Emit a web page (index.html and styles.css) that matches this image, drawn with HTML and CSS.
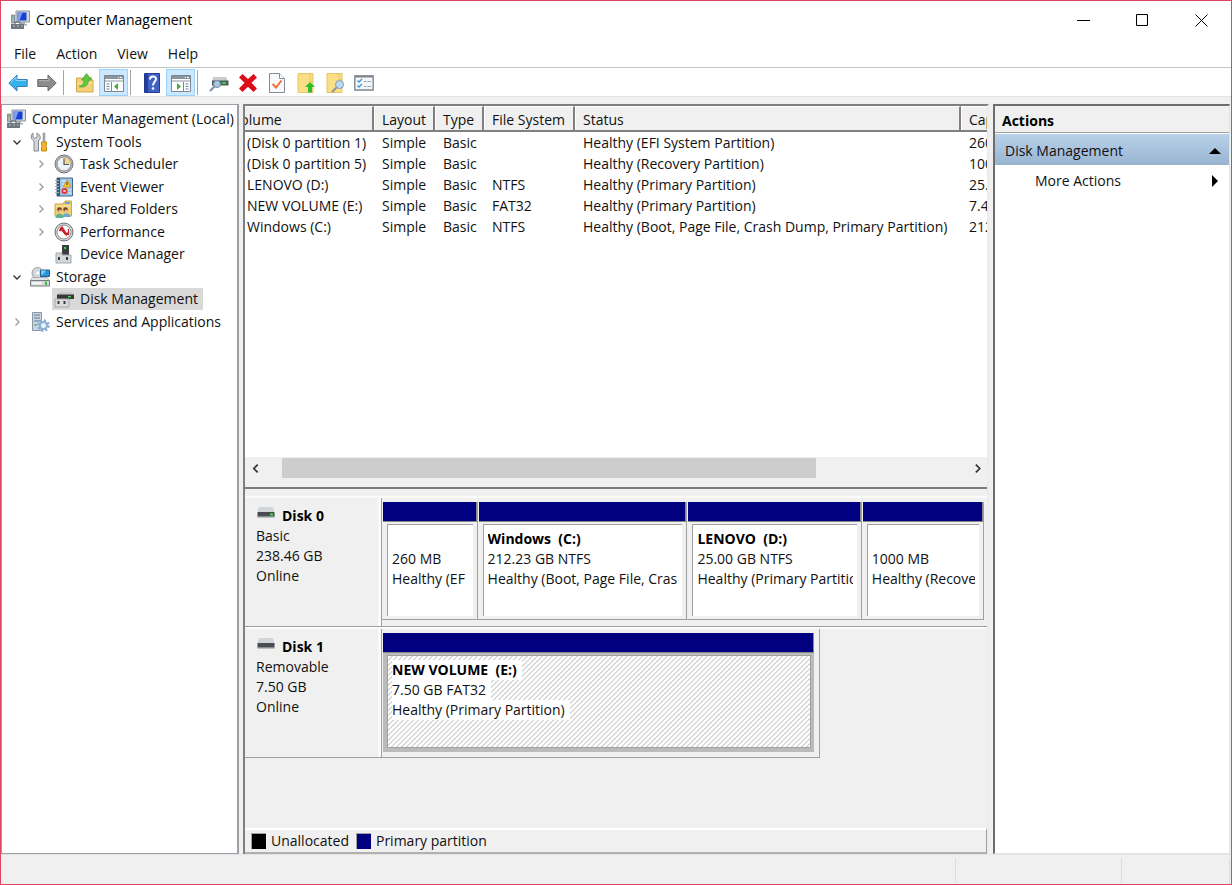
FILE: index.html
```html
<!DOCTYPE html>
<html lang="en">
<head>
  <meta charset="UTF-8">
  <meta name="viewport" content="width=device-width, initial-scale=1.0">
  <title>Computer Management</title>
  <link rel="stylesheet" href="styles.css">
</head>
<body>
  <!-- shared icons -->
  <svg class="sprite" aria-hidden="true">
    <symbol id="icon-computer" viewBox="0 0 20 20">
      <path d="M6 1h13.500v11H6z" fill="#d5dadf" stroke="#8b949e" stroke-width="1"/>
      <path d="M7.500 2.500h9v8h-9z" fill="#1b3fd0"/>
      <path d="M7.500 2.500h5l-3 8h-2z" fill="#7f9df0"/>
      <path d="M1.500 5h3v8h-3z" fill="#aab2ba" stroke="#737b84" stroke-width=".8"/>
      <path d="M11 12h4v2h2v1.500h-7z" fill="#a7afb6"/>
      <path d="M1 14h13v5H1z" fill="#6d7780"/>
      <path d="M5 14v-2h5v2" fill="none" stroke="#4e5963"/>
      <path d="M3 16h2M7 16h2M11 16h1.500" stroke="#b9bfc5" stroke-width="1"/>
      <circle cx="3" cy="7" r=".8" fill="#3ac44a"/>
    </symbol>
    <symbol id="icon-drive" viewBox="0 0 18 12">
      <path d="M2 0h14l1.500 5H.5z" fill="#d2d5d8"/>
      <path d="M.5 5h17v4.500H.5z" fill="#4a4d4f"/>
      <path d="M.5 9h17v1.500H.5z" fill="#8b8e90"/>
    </symbol>
  </svg>

  <header class="title-bar">
    <svg class="icon"><use href="#icon-computer"/></svg>
    <h1>Computer Management</h1>
    <div class="window-buttons">
      <button type="button" aria-label="Minimize"><svg viewBox="0 0 13 13"><path d="M0 6.500h13"/></svg></button>
      <button type="button" aria-label="Maximize"><svg viewBox="0 0 13 13"><path d="M.5.5h11v11H.5z"/></svg></button>
      <button type="button" aria-label="Close"><svg viewBox="0 0 13 13"><path d="M.5.5l12 12M12.500.5l-12 12"/></svg></button>
    </div>
  </header>

  <nav class="menu-bar">
    <button type="button">File</button>
    <button type="button">Action</button>
    <button type="button">View</button>
    <button type="button">Help</button>
  </nav>

  <div class="toolbar">
    <button type="button" aria-label="Back">
      <svg class="icon" viewBox="0 0 20 20"><path d="M.8 10L9 2v4.500h10.200v7H9V18z" fill="#35b1ee" stroke="#3a7fb4"/><path d="M2.500 9.500L8 4.200v3.300h10" fill="none" stroke="#8bd8fb"/></svg>
    </button>
    <button type="button" aria-label="Forward">
      <svg class="icon" viewBox="0 0 20 20"><path d="M19.200 10L11 2v4.500H.8v7H11V18z" fill="#8c8c8c" stroke="#686868"/><path d="M2 7.700h10V4.500" fill="none" stroke="#b5b5b5"/></svg>
    </button>
    <span class="separator"></span>
    <button type="button" aria-label="Up one level">
      <svg class="icon" viewBox="0 0 20 20"><path d="M1.500 5h6l2 2h8.500v12H1.500z" fill="#f3d077" stroke="#d2a849"/><path d="M2.500 10h15" stroke="#fbe7a8"/><path d="M13 4h4v2h-4z" fill="#d8b560"/><path d="M4 13.500c3.500-.5 5-3 5-6.500H6.500l5-6.500 5 6.500h-3c0 5-4 8.500-9.500 6.500z" fill="#5cc93f" stroke="#3f9e2b" stroke-width=".7"/></svg>
    </button>
    <button type="button" class="active" aria-label="Show/Hide Console Tree">
      <svg class="icon" viewBox="0 0 20 20"><path d="M.5 2.500h19v16H.5z" fill="#fff" stroke="#7d8791"/><path d="M1 3h18v3H1z" fill="#8a949e"/><path d="M14 4.500h1m1 0h2" stroke="#fff"/><path d="M1 7h18v2H1z" fill="#c4cad0"/><path d="M7.500 9v9" stroke="#7d8791"/><path d="M2.500 11h3m-3 2.500h3m-3 2.500h3" stroke="#5b87b5"/><path d="M14 10v7l-4-3.500z" fill="#3fae35"/></svg>
    </button>
    <span class="separator"></span>
    <button type="button" aria-label="Help">
      <svg class="icon" viewBox="0 0 20 20"><path d="M2.500.5h15v19h-15z" fill="#3f62c4" stroke="#203a8d"/><path d="M3 1h3v18H3z" fill="#243f96"/><path d="M8 6.500c0-4 6-4 6-.5 0 2.500-3 3-3 6.500" fill="none" stroke="#fff" stroke-width="2"/><circle cx="11" cy="15.500" r="1.300" fill="#fff"/></svg>
    </button>
    <button type="button" class="active" aria-label="Show/Hide Action Pane">
      <svg class="icon" viewBox="0 0 20 20"><path d="M.5 2.500h19v16H.5z" fill="#fff" stroke="#7d8791"/><path d="M1 3h18v3H1z" fill="#8a949e"/><path d="M14 4.500h1m1 0h2" stroke="#fff"/><path d="M1 7h18v2H1z" fill="#c4cad0"/><path d="M12.500 9v9" stroke="#7d8791"/><path d="M14.500 11h3m-3 2.500h3m-3 2.500h3" stroke="#5b87b5"/><path d="M6 10v7l4-3.500z" fill="#3fae35"/></svg>
    </button>
    <span class="separator"></span>
    <button type="button" aria-label="Rescan disks">
      <svg class="icon" viewBox="0 0 20 20"><path d="M4 4h13l2 4H3z" fill="#c8cccf"/><path d="M3 7.500h16.500v5H3z" fill="#55595c"/><path d="M13 9h4v2h-4z" fill="#35d04c"/><path d="M1 18l5-5" stroke="#7a8fa3" stroke-width="2"/><circle cx="8" cy="11" r="3.500" fill="#a9c7df" stroke="#708ba2"/></svg>
    </button>
    <button type="button" aria-label="Delete">
      <svg class="icon" viewBox="0 0 20 20"><path d="M1 4.500L4.500 1 10 6l5.500-5L19 4.500 13.500 9.800l5.500 5.700-3.500 3.500L10 13.700 4.500 19 1 15.500l5.500-5.700z" fill="#dc0d19"/></svg>
    </button>
    <button type="button" aria-label="Properties">
      <svg class="icon" viewBox="0 0 20 20"><path d="M2.500.5h10l5 5v14h-15z" fill="#f8f9fb" stroke="#858b92"/><path d="M12.500.5v5h5" fill="#fff" stroke="#858b92"/><path d="M5.500 11l3.500 3.500 5.500-7" fill="none" stroke="#ee7038" stroke-width="2"/></svg>
    </button>
    <button type="button" aria-label="Attach VHD">
      <svg class="icon" viewBox="0 0 20 20"><path d="M2 .5h15v19H2z" fill="#fbdf87" stroke="#e7c565"/><path d="M14 .5v8h3" fill="none" stroke="#e7c565"/><path d="M14 9l5 5h-3v5.500h-4V14H9z" fill="#2fbf2b"/></svg>
    </button>
    <button type="button" aria-label="Create VHD">
      <svg class="icon" viewBox="0 0 20 20"><path d="M2 .5h15v19H2z" fill="#fbdf87" stroke="#e7c565"/><path d="M14 .5v6h3" fill="none" stroke="#e7c565"/><path d="M7 19l5-5" stroke="#8d949c" stroke-width="2"/><circle cx="14.500" cy="11.500" r="4" fill="#bcdaf0" stroke="#8297aa"/></svg>
    </button>
    <button type="button" aria-label="Disk list">
      <svg class="icon" viewBox="0 0 20 20"><path d="M.8 3h18.400v14H.8z" fill="#f4f6f8" stroke="#7f878f" stroke-width="1.400"/><path d="M1 3.500h18" stroke="#7f878f" stroke-width="2"/><path d="M3.500 7.500l1.500 1.500 3-3M3.500 12.500L5 14l3-3" fill="none" stroke="#3e98e0" stroke-width="1.400"/><path d="M10 8.500h2.500m1 0H17M10 13.500h2.500m1 0H17" stroke="#9aa2aa"/></svg>
    </button>
  </div>

  <main class="workspace">
    <!-- console tree -->
    <aside class="tree-pane">
      <ul class="tree">
        <li class="root">
          <span class="node"><svg class="icon"><use href="#icon-computer"/></svg>Computer Management (Local)</span>
        </li>
        <li>
          <svg class="twisty open" viewBox="0 0 8 8"><path d="M.5 2.500L4 6l3.500-3.500"/></svg>
          <span class="node">
            <svg class="icon" viewBox="0 0 20 20"><path d="M3 1v4l2 1.500L7 5V1c4 2 4 6 1.500 8v10H4V9C.5 7 .5 3 3 1z" fill="#d3d6d9" stroke="#85898d"/><path d="M13 1h2v9h-2z" fill="#a9adb0" stroke="#85898d" stroke-width=".5"/><path d="M11.500 10h5v3l-1 1 1 1v4h-5v-4l1-1-1-1z" fill="#f5b429" stroke="#cb8a14"/></svg>
            System Tools
          </span>
        </li>
        <li class="child">
          <svg class="twisty" viewBox="0 0 8 8"><path d="M2.500.5L6 4 2.500 7.500"/></svg>
          <span class="node">
            <svg class="icon" viewBox="0 0 20 20"><circle cx="10" cy="10" r="9" fill="#b0b4b8" stroke="#76797d"/><circle cx="10" cy="10" r="7" fill="#eef3fa" stroke="#8f9398"/><path d="M10 10V3.500a6.500 6.500 0 0 1 6.500 6.500z" fill="#f6d48a"/><path d="M10 4.500V10.500h5" fill="none" stroke="#4d5966" stroke-width="1.200"/></svg>
            Task Scheduler
          </span>
        </li>
        <li class="child">
          <svg class="twisty" viewBox="0 0 8 8"><path d="M2.500.5L6 4 2.500 7.500"/></svg>
          <span class="node">
            <svg class="icon" viewBox="0 0 20 20"><path d="M3 1h15.500v18H3z" fill="#9cc3e4" stroke="#41678b"/><path d="M3 1h3v18H3z" fill="#385978"/><path d="M1 3.500h4m-4 3h4m-4 3h4m-4 3h4m-4 3h4" stroke="#a2aeb9"/><path d="M7.500 4h5m-5 3h3m-3 3h4m3 3h3m-3 3h3" stroke="#e8f4ff"/><path d="M13 3l4 7H9z" fill="#fbc530" stroke="#c79116" stroke-width=".7"/><path d="M13 5v3" stroke="#4a3a10"/><circle cx="10.500" cy="14" r="3" fill="#de3b35"/><path d="M9.500 13l2 2m0-2l-2 2" stroke="#fff" stroke-width=".9"/></svg>
            Event Viewer
          </span>
        </li>
        <li class="child">
          <svg class="twisty" viewBox="0 0 8 8"><path d="M2.500.5L6 4 2.500 7.500"/></svg>
          <span class="node">
            <svg class="icon" viewBox="0 0 20 20"><path d="M1 5h8l2-3h6.500v15H1z" fill="#f3cf73" stroke="#d0a646"/><path d="M11 4h5" stroke="#5aa9dd" stroke-width="2"/><path d="M2 7h15" stroke="#fbe9b0"/><circle cx="5.500" cy="10.500" r="2.300" fill="#6d4526"/><circle cx="11.500" cy="10.500" r="2.300" fill="#6d4526"/><circle cx="6" cy="12" r="1.600" fill="#e9bd92"/><circle cx="12" cy="12" r="1.600" fill="#e9bd92"/><path d="M1.500 19c0-6 8-6 8 0z" fill="#5fb68a"/><path d="M8.500 18c0-5 8-5 8 0z" fill="#66abd6"/></svg>
            Shared Folders
          </span>
        </li>
        <li class="child">
          <svg class="twisty" viewBox="0 0 8 8"><path d="M2.500.5L6 4 2.500 7.500"/></svg>
          <span class="node">
            <svg class="icon" viewBox="0 0 20 20"><circle cx="10" cy="10" r="9" fill="#dcdedf" stroke="#6c6f72"/><circle cx="10" cy="10" r="7" fill="#fff" stroke="#85898c"/><path d="M5.500 9l2.500-3.500 4.500 7 2.500-2" fill="none" stroke="#d31f28" stroke-width="2"/><path d="M14.500 13V7M6 6l6 7" stroke="#b51820" stroke-width="1.200"/></svg>
            Performance
          </span>
        </li>
        <li class="child">
          <span class="twisty"></span>
          <span class="node">
            <svg class="icon" viewBox="0 0 20 20"><path d="M8 1h7v10H8z" fill="#3b3e40"/><path d="M10 3h2v2h-2z" fill="#49d34b"/><path d="M2 9h6v2h9v8H2z" fill="#d4d7d9" stroke="#a4a8ab"/><path d="M5 13v3m8-3v3" stroke="#393c3e" stroke-width="2"/></svg>
            Device Manager
          </span>
        </li>
        <li>
          <svg class="twisty open" viewBox="0 0 8 8"><path d="M.5 2.500L4 6l3.500-3.500"/></svg>
          <span class="node">
            <svg class="icon" viewBox="0 0 20 20"><circle cx="7.500" cy="6" r="5.500" fill="#d4d8dc" stroke="#9aa0a6"/><circle cx="7.500" cy="6" r="1.500" fill="#fff"/><path d="M2 10.500h15l2.500 3H.5z" fill="#e2e5e7" stroke="#979ca0" stroke-width=".7"/><path d="M.5 13.500h19v5.500H.5z" fill="#d5d8da" stroke="#777c80"/><path d="M2 15h10v2.500H2z" fill="#f1f3f4"/><path d="M15 14.500h2v3.500h-2z" fill="#42bd3d"/><path d="M10.500 3h9v6.500h-9z" fill="#2e93d6" stroke="#1d6295"/><path d="M11 3.500h5l-3 4h-2z" fill="#80c9f4"/></svg>
            Storage
          </span>
        </li>
        <li class="child">
          <span class="twisty"></span>
          <span class="node selected">
            <svg class="icon" viewBox="0 0 20 20"><path d="M5 3h13l2 3H3z" fill="#c7cacd"/><path d="M3 5.500h17v4.500H3z" fill="#35383a"/><path d="M14 7h3v1.500h-3z" fill="#4bd34b"/><path d="M1 10h14v8H1z" fill="#d9dbdd" stroke="#a4a8ab"/><path d="M4.500 12v3m6-3v3" stroke="#393c3e" stroke-width="2"/></svg>
            Disk Management
          </span>
        </li>
        <li>
          <svg class="twisty" viewBox="0 0 8 8"><path d="M2.500.5L6 4 2.500 7.500"/></svg>
          <span class="node">
            <svg class="icon" viewBox="0 0 20 20"><path d="M2.500.5h9v18h-9z" fill="#c9d4de" stroke="#8798a8"/><path d="M4 3h6M4 6h6M4 9h6" stroke="#657d94" stroke-width="1.200"/><circle cx="5.500" cy="13" r="1" fill="#49b34a"/><circle cx="13.500" cy="13.500" r="5" fill="none" stroke="#7fa8cd" stroke-width="2.500" stroke-dasharray="2 1.900"/><circle cx="13.500" cy="13.500" r="3.500" fill="#e9f2fa" stroke="#8ab0d3" stroke-width="2"/></svg>
            Services and Applications
          </span>
        </li>
      </ul>
    </aside>

    <!-- volumes and disks -->
    <section class="disk-pane">
      <div class="volume-list">
        <div class="table-view">
          <table>
            <colgroup>
              <col class="col-volume">
              <col class="col-layout">
              <col class="col-type">
              <col class="col-fs">
              <col class="col-status">
              <col class="col-capacity">
            </colgroup>
            <thead>
              <tr><th>Volume</th><th>Layout</th><th>Type</th><th>File System</th><th>Status</th><th>Capacity</th></tr>
            </thead>
            <tbody>
              <tr><td>(Disk 0 partition 1)</td><td>Simple</td><td>Basic</td><td></td><td>Healthy (EFI System Partition)</td><td>260 MB</td></tr>
              <tr><td>(Disk 0 partition 5)</td><td>Simple</td><td>Basic</td><td></td><td>Healthy (Recovery Partition)</td><td>1000 MB</td></tr>
              <tr><td>LENOVO (D:)</td><td>Simple</td><td>Basic</td><td>NTFS</td><td>Healthy (Primary Partition)</td><td>25.00 GB</td></tr>
              <tr><td>NEW VOLUME (E:)</td><td>Simple</td><td>Basic</td><td>FAT32</td><td>Healthy (Primary Partition)</td><td>7.49 GB</td></tr>
              <tr><td>Windows (C:)</td><td>Simple</td><td>Basic</td><td>NTFS</td><td>Healthy (Boot, Page File, Crash Dump, Primary Partition)</td><td>212.23 GB</td></tr>
            </tbody>
          </table>
        </div>
        <div class="scrollbar">
          <button type="button" aria-label="Scroll left"><svg viewBox="0 0 8 8"><path d="M6 .5L2.500 4 6 7.500"/></svg></button>
          <div class="track"><div class="thumb"></div></div>
          <button type="button" aria-label="Scroll right"><svg viewBox="0 0 8 8"><path d="M2.500.5L6 4 2.500 7.500"/></svg></button>
        </div>
      </div>

      <div class="disks">
        <div class="disk">
          <div class="disk-info">
            <h2>
              <svg viewBox="0 0 18 12"><use href="#icon-drive"/><path d="M13 6.500h3v2h-3z" fill="#3fdc4c"/></svg>
              Disk 0
            </h2>
            <p>Basic</p>
            <p>238.46 GB</p>
            <p>Online</p>
          </div>
          <div class="partitions">
            <div class="partition size-efi">
              <div class="bar"></div>
              <div class="details"><b></b><span>260 MB</span><span>Healthy (EF</span></div>
            </div>
            <div class="partition size-c">
              <div class="bar"></div>
              <div class="details"><b>Windows&nbsp; (C:)</b><span>212.23 GB NTFS</span><span>Healthy (Boot, Page File, Crash Dump, Primary Partition)</span></div>
            </div>
            <div class="partition size-d">
              <div class="bar"></div>
              <div class="details"><b>LENOVO&nbsp; (D:)</b><span>25.00 GB NTFS</span><span>Healthy (Primary Partition)</span></div>
            </div>
            <div class="partition size-recovery">
              <div class="bar"></div>
              <div class="details"><b></b><span>1000 MB</span><span>Healthy (Recovery Partition)</span></div>
            </div>
          </div>
        </div>

        <div class="disk">
          <div class="disk-info">
            <h2>
              <svg viewBox="0 0 18 12"><use href="#icon-drive"/></svg>
              Disk 1
            </h2>
            <p>Removable</p>
            <p>7.50 GB</p>
            <p>Online</p>
          </div>
          <div class="partitions removable">
            <div class="partition focused">
              <div class="bar"></div>
              <div class="details"><b>NEW VOLUME&nbsp; (E:)</b><span>7.50 GB FAT32</span><span>Healthy (Primary Partition)</span></div>
            </div>
          </div>
        </div>
      </div>

      <div class="legend">
        <span class="swatch unallocated"></span>Unallocated
        <span class="swatch primary"></span>Primary partition
      </div>
    </section>

    <!-- actions -->
    <aside class="actions-pane">
      <h2>Actions</h2>
      <button type="button" class="actions-group">
        Disk Management
        <svg viewBox="0 0 12 12"><path d="M0 9l6-6 6 6z"/></svg>
      </button>
      <button type="button" class="actions-item">
        More Actions
        <svg viewBox="0 0 12 12"><path d="M3 0l6 6-6 6z"/></svg>
      </button>
    </aside>
  </main>

  <footer class="status-bar">
    <span class="status-text"></span>
    <span class="status-progress"></span>
    <span class="status-extra"></span>
  </footer>
</body>
</html>
```

FILE: styles.css
```css
* {
  box-sizing: border-box;
}
body {
  margin: 0;
  min-height: 100vh;
  display: flex;
  flex-direction: column;
  border: 1px solid #dc4662;
  background: #f0f0f0;
  color: #111;
  font-family: "Open Sans", "Noto Sans", sans-serif;
  font-size: 14px;
  line-height: 20px;
}
button {
  margin: 0;
  padding: 0;
  border: none;
  background: none;
  color: inherit;
  font: inherit;
}
h1, h2, p, ul {
  margin: 0;
  padding: 0;
  font-size: 14px;
}
.sprite {
  position: absolute;
  width: 0;
  height: 0;
}
.icon {
  flex: none;
  width: 20px;
  height: 20px;
}

/* title bar */
.title-bar {
  display: flex;
  align-items: center;
  height: 38px;
  padding-left: 9px;
  background: #fff;
}
.title-bar h1 {
  margin-left: 6px;
  font-weight: normal;
  color: #000;
}
.window-buttons {
  display: flex;
  margin-left: auto;
}
.window-buttons button {
  display: flex;
  align-items: center;
  justify-content: center;
  width: 59px;
  height: 38px;
}
.window-buttons svg {
  width: 13px;
  height: 13px;
  fill: none;
  stroke: #000;
}

/* menu */
.menu-bar {
  display: flex;
  height: 29px;
  padding: 2px 0 0 3px;
  border-bottom: 1px solid #c3c7c8;
  background: #fff;
}
.menu-bar button {
  padding: 0 10px;
}

/* toolbar */
.toolbar {
  display: flex;
  align-items: flex-end;
  height: 29px;
  padding-left: 2px;
  border-bottom: 1px solid #e3e3e3;
  background: #fff;
}
.toolbar button {
  display: flex;
  align-items: center;
  justify-content: center;
  width: 29px;
  height: 27px;
}
.toolbar .active {
  border: 1px solid #99d1ff;
  background: #cce8ff;
}
.separator {
  width: 7px;
  height: 25px;
  margin: 0 0 1px 2px;
  border-left: 1px solid #a5a5a5;
}

/* three panes */
.workspace {
  flex: 1;
  display: grid;
  grid-template-columns: 238px minmax(0, 1fr) 237px;
  gap: 4px;
  padding: 7px 1px 0 0;
}
.tree-pane {
  border: 2px solid #9a9ea5;
  border-width: 1px 2px 1px 1px;
  background: #fff;
}
.tree {
  display: grid;
  grid-auto-rows: 1fr;
  height: 225px;
  margin-top: 3px;
  list-style: none;
}
.tree li {
  display: flex;
  align-items: center;
  padding-left: 6px;
}
.tree .root {
  padding-left: 2px;
}
.tree .child {
  padding-left: 30px;
}
.twisty {
  flex: none;
  width: 8px;
  height: 8px;
  margin: 0 7px 0 5px;
  fill: none;
  stroke: #999;
  stroke-width: 1.3;
}
.twisty.open {
  stroke: #333;
}
.node {
  display: flex;
  align-items: center;
  gap: 6px;
  height: 22px;
  padding: 0 5px 0 2px;
  white-space: nowrap;
}
.node.selected {
  background: #d9d9d9;
}

/* centre pane */
.disk-pane {
  display: flex;
  flex-direction: column;
  border: 2px solid #808080;
  border-right-color: #ececec;
  border-bottom: none;
}
.volume-list {
  display: flex;
  flex-direction: column;
  height: 383px;
  border-bottom: 2px solid #7a7a7a;
  background: #f0f0f0;
}
.table-view {
  flex: 1;
  overflow: hidden;
  background: #fff;
}
table {
  width: 836px;
  margin-left: -18px; /* scrolled a little to the right */
  border-collapse: separate;
  border-spacing: 0;
  table-layout: fixed;
}
.col-volume { width: 147px; }
.col-layout { width: 61px; }
.col-type { width: 49px; }
.col-fs { width: 91px; }
.col-status { width: 386px; }
.col-capacity { width: 102px; }
th, td {
  overflow: hidden;
  padding: 0 0 0 8px;
  text-align: left;
  font-weight: normal;
  white-space: nowrap;
}
th {
  height: 24px;
  padding-top: 3px;
  border-top: 1px solid #fff;
  border-right: 2px solid #808080;
  border-bottom: 2px solid #808080;
  background: #f0f0f0;
  box-shadow: inset 1px 0 #fff;
}
td {
  height: 21px;
}
th:first-child {
  padding-left: 5px;
}
td:first-child {
  padding-left: 20px;
}
.scrollbar {
  display: flex;
  height: 30px;
  padding-bottom: 8px;
  background: #f0f0f0;
}
.scrollbar button {
  width: 20px;
}
.scrollbar svg {
  display: block;
  width: 9px;
  height: 9px;
  margin: 0 auto;
  fill: none;
  stroke: #333;
  stroke-width: 1.5;
}
.track {
  flex: 1;
  padding: 1px 0;
}
.thumb {
  width: 76%;
  height: 20px;
  margin-left: 17px;
  background: #cdcdcd;
}

/* disk map */
.disks {
  flex: 1;
  padding-top: 7px;
}
.disk {
  display: flex;
  height: 131px;
  border-top: 2px solid #fbfbfb;
}
.disk:first-child .partitions {
  border-bottom: 1px solid #a0a0a0;
}
.disk-info {
  flex: none;
  width: 137px;
  padding: 8px 0 0 11px;
  border-right: 1px solid #a0a0a0;
  border-bottom: 1px solid #a0a0a0;
  box-shadow: inset -3px 0 #fafafa;
}
.disk-info h2 {
  display: flex;
  align-items: center;
  gap: 6px;
  color: #000;
}
.disk-info h2 svg {
  width: 20px;
  height: 12px;
  margin-bottom: 6px;
}
.partitions {
  flex: 1;
  display: flex;
  min-width: 0;
  padding: 4px 3px 6px 0;
}
.partition {
  display: flex;
  flex-direction: column;
  min-width: 0;
  padding: 0 0 3px 1px;
  border-right: 1px solid #a0a0a0;
  border-bottom: 1px solid #a0a0a0;
}
.size-efi { flex: 95; }
.size-c { flex: 211; }
.size-d { flex: 175; }
.size-recovery { flex: 122; }
.bar {
  height: 20px;
  border: 1px solid #888;
  border-width: 0 1px 1px 0;
  background: #000080;
}
.details {
  flex: 1;
  display: flex;
  flex-direction: column;
  align-items: flex-start;
  overflow: hidden;
  margin: 2px 4px 0 4px;
  padding: 4px 4px 0 4px;
  border-top: 1px solid #a0a0a0;
  border-left: 1px solid #a0a0a0;
  background: #fff;
}
.details b,
.details span {
  max-width: 100%;
  height: 20px;
  overflow: hidden;
  white-space: nowrap;
}
.details b {
  color: #000;
}
.removable {
  flex: 0 0 59%;
  margin-right: auto;
  border: 1px solid #a0a0a0;
  border-width: 0 1px 1px 0;
  padding: 4px 5px 5px 0;
}
.focused {
  flex: 1;
  margin-left: 1px;
  padding: 0;
  border: 1px solid #bbb;
  border-width: 0 0 1px;
  background: #bbb;
}
.focused .details {
  margin: 2px 3px 3px 4px;
  border: 1px solid #a0a0a0;
  background: linear-gradient(135deg, #d8d8d8 10%, #fff 10%, #fff 40%, #d8d8d8 40%, #d8d8d8 60%, #fff 60%, #fff 90%, #d8d8d8 90%) 0 0 / 5px 5px;
}
.focused .details b,
.focused .details span {
  padding-right: 5px;
  background: #fff;
}

/* legend */
.legend {
  display: flex;
  align-items: center;
  height: 26px;
  padding-left: 6px;
  border-top: 2px solid #fff;
  border-right: 1px solid #a0a0a0;
  border-bottom: 2px solid #b0b0b0;
}
.swatch {
  width: 15px;
  height: 16px;
  margin-right: 5px;
  border: 1px solid #a0a0a0;
  border-width: 1px 0 0 1px;
}
.unallocated {
  background: #000;
}
.primary {
  margin-left: 7px;
  background: #000080;
}

/* actions */
.actions-pane {
  border: 2px solid #6d6d6d;
  border-width: 2px 1px 1px 2px;
  border-right-color: #e3e3e3;
  border-bottom-color: #e3e3e3;
  background: #fff;
}
.actions-pane h2 {
  height: 27px;
  padding: 5px 7px 0;
  border-bottom: 1px solid #a0a0a0;
  background: #f0f0f0;
  color: #000;
}
.actions-pane button {
  display: flex;
  align-items: center;
  justify-content: space-between;
  width: 100%;
  height: 31px;
  padding: 0 8px 0 10px;
}
.actions-pane svg {
  width: 12px;
  height: 12px;
}
.actions-pane .actions-group {
  margin-top: 1px;
  padding-top: 2px;
  background: linear-gradient(#b9d1ea, #99b4d1);
}
.actions-pane .actions-item {
  padding-left: 40px;
}

/* status bar */
.status-bar {
  display: flex;
  height: 30px;
  padding: 3px 1px 1px 0;
  border-top: 1px solid #e3e3e3;
}
.status-bar span {
  border-right: 1px solid #dcdcdc;
}
.status-text {
  flex: 1;
}
.status-progress {
  width: 166px;
}
.status-extra {
  width: 108px;
}
```
